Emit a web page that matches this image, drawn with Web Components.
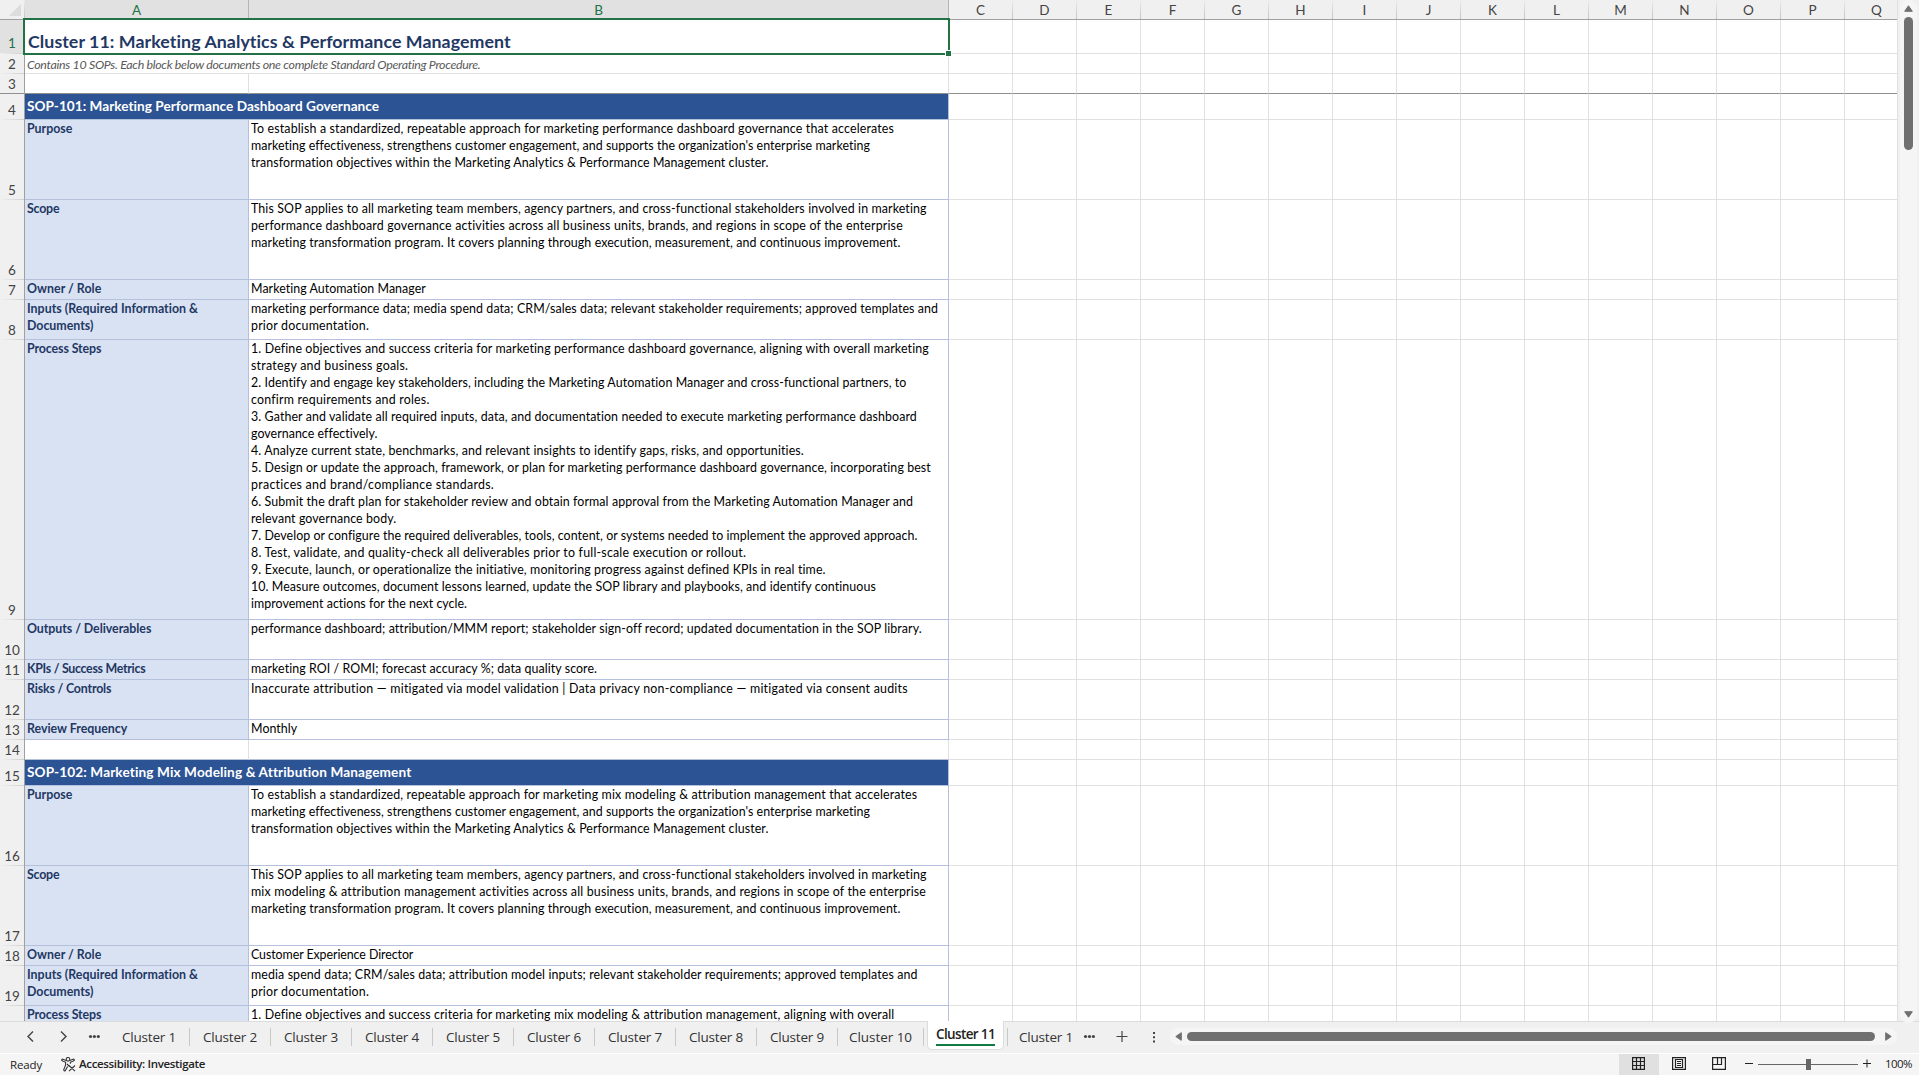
<!DOCTYPE html>
<html lang="en">
<head>
<meta charset="utf-8">
<title>Cluster 11</title>
<style>
  html, body {
    margin: 0;
    height: 100%;
    overflow: hidden;
    background: #f0f0f0;
  }
</style>
</head>
<body>
<sheet-app></sheet-app>

<script>
// One line of text spread over a given width in pixels
class FitText extends HTMLElement {
  constructor() {
    super().attachShadow({ mode: "open" }).innerHTML = /*html*/ `
      <style>
        :host { display: block; width: max-content; white-space: nowrap; }
      </style>
      <slot></slot>
    `;
  }
  connectedCallback() {
    const width = Number(this.getAttribute("width"));
    if (!width) return;
    const natural = this.getBoundingClientRect().width;
    this.style.letterSpacing = `${(width - natural) / this.textContent.length}px`;
  }
}
customElements.define("fit-text", FitText);

const escapeText = (s) => s.replace(/&/g, "&amp;");
const fit = ([text, width]) => `<fit-text width="${width - 0.7}">${escapeText(text)}</fit-text>`;

const COLUMNS = "CDEFGHIJKLMNOPQ".split("");

class ColumnHeader extends HTMLElement {
  constructor() {
    super().attachShadow({ mode: "open" }).innerHTML = /*html*/ `
      <style>
        :host {
          display: flex;
          height: 19px;
          border-bottom: 1px solid #a0a0a0;
          background: #f0f0f0;
          font: 13.5px/19px Lato, "Liberation Sans", sans-serif;
          color: #444;
        }
        div {
          box-sizing: border-box;
          flex: 0 0 64px;
          text-align: center;
          padding-top: 1px;
          border-right: 1px solid;
          border-image: linear-gradient(#f0f0f0, #c0c0c0) 1;
        }
        .corner {
          flex-basis: 25px;
          display: flex;
          justify-content: flex-end;
          padding: 4px 3px 0 0;
        }
        .corner svg { width: 12px; height: 12px; }
        .on { background: #e1e1e1; color: #217346; border-image: none; border-color: #b5b5b5; }
        .a { flex-basis: 224px; }
        .b { flex-basis: 700px; }
      </style>
      <div class="corner"><svg viewBox="0 0 12 12"><path d="M12 0V12H0z" fill="#dcdcdc"/></svg></div>
      <div class="on a">A</div>
      <div class="on b">B</div>
      ${COLUMNS.map((c) => `<div>${c}</div>`).join("")}
    `;
  }
}
customElements.define("column-header", ColumnHeader);

class SheetRow extends HTMLElement {
  constructor() {
    super().attachShadow({ mode: "open" }).innerHTML = /*html*/ `
      <style>
        :host {
          display: flex;
          height: var(--h);
          font: 12.4px/17px Lato, "Liberation Sans", sans-serif;
          color: #000;
          --line: #e0e0e0;
          --edge: #b4c0dc;
        }
        div {
          box-sizing: border-box;
          flex: 0 0 64px;
          overflow: hidden;
          border-right: 1px solid var(--line);
          border-bottom: 1px solid var(--line);
        }
        .num {
          flex-basis: 25px;
          display: flex;
          align-items: flex-end;
          justify-content: center;
          padding-bottom: 1px;
          background: linear-gradient(90deg, #f0f0f0, #cfcfcf) bottom / 100% 1px no-repeat #f0f0f0;
          border-right-color: #a0a0a0;
          border-bottom: 0;
          font-size: 13.5px;
          color: #444;
        }
        .a { flex-basis: 224px; padding-left: 2px; }
        .b { flex-basis: 700px; padding-left: 2px; }
        .ab { flex-basis: 924px; padding-left: 2px; }
        :host([kind="field"]) .a {
          background: #d9e2f3;
          color: #1f3864;
          font-weight: bold;
          border-color: var(--edge);
        }
        :host([kind="field"]) .b { border-color: var(--edge); }
        :host([kind="title"]) .num { background-color: #e1e1e1; color: #217346; padding-bottom: 2px; }
        :host([kind="title"]) .ab {
          padding: 10px 0 0 3px;
          font: bold 17.8px/22px Lato, sans-serif;
          color: #1f3864;
        }
        :host([kind="note"]) .ab { padding-top: 2px; font-style: italic; font-size: 12.4px; color: #595959; }
        :host([kind="sop"]) .ab {
          padding-top: 4px;
          background: #2c5393;
          color: #fff;
          font-weight: bold;
          font-size: 13.6px;
          border-color: var(--edge);
        }
        :host([frozen]) div:not(.num) { border-bottom-color: #909090; }
        :host([frozen]) .num { background-image: linear-gradient(#909090, #909090); }
        :host([above]) .a, :host([above]) .b { border-bottom-color: var(--edge); }
        :host([last]) div { border-bottom: 0; }
        :host([last]) .num { background-image: none; }
      </style>
    `;
  }
  set data({ n, h, kind, a = [], b = [] }) {
    this.style.setProperty("--h", `${h}px`);
    this.setAttribute("kind", kind);
    const merged = kind === "title" || kind === "note" || kind === "sop";
    this.shadowRoot.innerHTML += /*html*/ `
      <div class="num">${n}</div>
      ${merged
        ? `<div class="ab">${a.map(fit).join("")}</div>`
        : `<div class="a">${a.map(fit).join("")}</div><div class="b">${b.map(fit).join("")}</div>`}
      ${COLUMNS.map(() => "<div></div>").join("")}
    `;
  }
}
customElements.define("sheet-row", SheetRow);

const ROWS = [
  { h: 34, kind: "title", a: [["Cluster 11: Marketing Analytics & Performance Management", 484]] },
  { h: 20, kind: "note", a: [["Contains 10 SOPs. Each block below documents one complete Standard Operating Procedure.", 454]] },
  { h: 20, kind: "blank", frozen: true },
  { h: 26, kind: "sop", a: [["SOP-101: Marketing Performance Dashboard Governance", 353]] },
  { h: 80, kind: "field", a: [["Purpose", 46]], b: [
    ["To establish a standardized, repeatable approach for marketing performance dashboard governance that accelerates", 644],
    ["marketing effectiveness, strengthens customer engagement, and supports the organization's enterprise marketing", 620],
    ["transformation objectives within the Marketing Analytics & Performance Management cluster.", 519]] },
  { h: 80, kind: "field", a: [["Scope", 33]], b: [
    ["This SOP applies to all marketing team members, agency partners, and cross-functional stakeholders involved in marketing", 677],
    ["performance dashboard governance activities across all business units, brands, and regions in scope of the enterprise", 653],
    ["marketing transformation program. It covers planning through execution, measurement, and continuous improvement.", 651]] },
  { h: 20, kind: "field", a: [["Owner / Role", 75]], b: [["Marketing Automation Manager", 176]] },
  { h: 40, kind: "field", a: [["Inputs (Required Information &", 172], ["Documents)", 67]], b: [
    ["marketing performance data; media spend data; CRM/sales data; relevant stakeholder requirements; approved templates and", 688],
    ["prior documentation.", 119]] },
  { h: 280, kind: "field", a: [["Process Steps", 75]], b: [
    ["1. Define objectives and success criteria for marketing performance dashboard governance, aligning with overall marketing", 679],
    ["strategy and business goals.", 158],
    ["2. Identify and engage key stakeholders, including the Marketing Automation Manager and cross-functional partners, to", 657],
    ["confirm requirements and roles.", 179],
    ["3. Gather and validate all required inputs, data, and documentation needed to execute marketing performance dashboard", 667],
    ["governance effectively.", 127],
    ["4. Analyze current state, benchmarks, and relevant insights to identify gaps, risks, and opportunities.", 554],
    ["5. Design or update the approach, framework, or plan for marketing performance dashboard governance, incorporating best", 681],
    ["practices and brand/compliance standards.", 244],
    ["6. Submit the draft plan for stakeholder review and obtain formal approval from the Marketing Automation Manager and", 663],
    ["relevant governance body.", 146],
    ["7. Develop or configure the required deliverables, tools, content, or systems needed to implement the approved approach.", 667],
    ["8. Test, validate, and quality-check all deliverables prior to full-scale execution or rollout.", 496],
    ["9. Execute, launch, or operationalize the initiative, monitoring progress against defined KPIs in real time.", 576],
    ["10. Measure outcomes, document lessons learned, update the SOP library and playbooks, and identify continuous", 626],
    ["improvement actions for the next cycle.", 217]] },
  { h: 40, kind: "field", a: [["Outputs / Deliverables", 125]], b: [["performance dashboard; attribution/MMM report; stakeholder sign-off record; updated documentation in the SOP library.", 671]] },
  { h: 20, kind: "field", a: [["KPIs / Success Metrics", 119]], b: [["marketing ROI / ROMI; forecast accuracy %; data quality score.", 347]] },
  { h: 40, kind: "field", a: [["Risks / Controls", 85]], b: [["Inaccurate attribution — mitigated via model validation | Data privacy non-compliance — mitigated via consent audits", 658]] },
  { h: 20, kind: "field", a: [["Review Frequency", 101]], b: [["Monthly", 47]] },
  { h: 20, kind: "blank", above: true },
  { h: 26, kind: "sop", a: [["SOP-102: Marketing Mix Modeling & Attribution Management", 385]] },
  { h: 80, kind: "field", a: [["Purpose", 46]], b: [
    ["To establish a standardized, repeatable approach for marketing mix modeling & attribution management that accelerates", 667],
    ["marketing effectiveness, strengthens customer engagement, and supports the organization's enterprise marketing", 620],
    ["transformation objectives within the Marketing Analytics & Performance Management cluster.", 519]] },
  { h: 80, kind: "field", a: [["Scope", 33]], b: [
    ["This SOP applies to all marketing team members, agency partners, and cross-functional stakeholders involved in marketing", 677],
    ["mix modeling & attribution management activities across all business units, brands, and regions in scope of the enterprise", 676],
    ["marketing transformation program. It covers planning through execution, measurement, and continuous improvement.", 651]] },
  { h: 20, kind: "field", a: [["Owner / Role", 75]], b: [["Customer Experience Director", 163]] },
  { h: 40, kind: "field", a: [["Inputs (Required Information &", 172], ["Documents)", 67]], b: [
    ["media spend data; CRM/sales data; attribution model inputs; relevant stakeholder requirements; approved templates and", 667],
    ["prior documentation.", 119]] },
  { h: 15, kind: "field", last: true, a: [["Process Steps", 75]], b: [
    ["1. Define objectives and success criteria for marketing mix modeling & attribution management, aligning with overall", 644]] },
];

class SheetGrid extends HTMLElement {
  constructor() {
    super().attachShadow({ mode: "open" }).innerHTML = /*html*/ `
      <style>
        :host {
          display: block;
          position: relative;
          box-sizing: border-box;
          width: 1898px;
          height: 1021px;
          overflow: hidden;
          background: #fff;
          border-right: 1px solid #e0e0e0;
        }
        /* selected range A1:B1 with its fill handle */
        .selection {
          position: absolute;
          box-sizing: border-box;
          left: 23px;
          top: 18px;
          width: 927px;
          height: 37px;
          border: 2px solid #217346;
        }
        .selection i {
          position: absolute;
          right: -4px;
          bottom: -4px;
          width: 5px;
          height: 5px;
          background: #217346;
          border: 1px solid #fff;
        }
      </style>
      <column-header></column-header>
    `;
  }
  connectedCallback() {
    ROWS.forEach((row, i) => {
      const el = document.createElement("sheet-row");
      el.toggleAttribute("frozen", !!row.frozen);
      el.toggleAttribute("above", !!row.above);
      el.toggleAttribute("last", !!row.last);
      this.shadowRoot.append(el);
      el.data = { n: row.last ? "" : i + 1, ...row };
    });
    const selection = document.createElement("div");
    selection.className = "selection";
    selection.innerHTML = "<i></i>";
    this.shadowRoot.append(selection);
  }
}
customElements.define("sheet-grid", SheetGrid);

class ScrollBar extends HTMLElement {
  constructor() {
    super().attachShadow({ mode: "open" }).innerHTML = /*html*/ `
      <style>
        :host {
          display: flex;
          box-sizing: border-box;
          align-items: center;
          justify-content: space-between;
          background: #f5f5f5;
          border-radius: 9px;
        }
        :host([vertical]) { flex-direction: column; }
        i { background: #707070; border-radius: 4.5px; }
        :host([vertical]) i { width: 9px; height: 133px; margin-bottom: auto; margin-top: 5px; }
        :host(:not([vertical])) i { height: 9px; width: 688px; margin-right: 5px; }
        svg { display: block; fill: #707070; stroke: #707070; stroke-linejoin: round; }
      </style>
      ${this.hasAttribute("vertical")
        ? `<svg width="9" height="7"><path d="M4.5 .8L8.3 6.3H.7z"/></svg><i></i>
           <svg width="9" height="7"><path d="M4.5 6.2L8.3 .7H.7z"/></svg>`
        : `<svg width="7" height="9"><path d="M.8 4.5L6.3 .7V8.3z"/></svg><i></i>
           <svg width="7" height="9"><path d="M6.2 4.5L.7 .7V8.3z"/></svg>`}
    `;
  }
}
customElements.define("scroll-bar", ScrollBar);

class SheetTab extends HTMLElement {
  constructor() {
    super().attachShadow({ mode: "open" }).innerHTML = /*html*/ `
      <style>
        :host {
          display: flex;
          box-sizing: border-box;
          flex: none;
          width: 81px;
          height: 18px;
          margin-top: 6px;
          justify-content: center;
          border-right: 1px solid #c8c8c8;
          font: 13.5px/18px "Open Sans", "Noto Sans", sans-serif;
          color: #333;
        }
        :host([wide]) { width: 86px; }
        :host([cut]) { width: 70px; border: 0; }
        :host([active]) {
          width: 77px;
          height: 29px;
          margin: -1px 3px 0;
          padding-top: 4px;
          background: #fff;
          border: 1px solid #dcdcdc;
          border-top: 0;
          border-radius: 0 0 5px 5px;
          font-weight: 600;
          color: #222;
        }
        :host([active]) fit-text { height: 19px; border-bottom: 2px solid #107c41; }
      </style>
      <fit-text width="${this.getAttribute("text-width")}">${this.getAttribute("label")}</fit-text>
    `;
  }
}
customElements.define("sheet-tab", SheetTab);

class TabBar extends HTMLElement {
  constructor() {
    super().attachShadow({ mode: "open" }).innerHTML = /*html*/ `
      <style>
        :host {
          display: flex;
          box-sizing: border-box;
          height: 33px;
          border-top: 1px solid #dcdcdc;
          border-bottom: 1px solid #fff;
          background: #f0f0f0;
        }
        svg { display: block; flex: none; fill: none; stroke: #444; }
        .dots { fill: #444; stroke: none; }
        .edge { width: 1px; height: 18px; margin: 6px 0 0; background: #c8c8c8; }
        scroll-bar { flex: none; width: 727px; height: 17px; margin: 6px 22px 0 auto; padding: 0 5px; }
      </style>
      <svg width="109" height="31">
        <path d="M33 9.5L28 14.5L33 19.5M61 9.5L66 14.5L61 19.5" stroke-width="1.4"/>
        <g class="dots"><circle cx="90.5" cy="14.5" r="1.6"/><circle cx="94.4" cy="14.5" r="1.6"/><circle cx="98.3" cy="14.5" r="1.6"/></g>
      </svg>
      ${[1, 2, 3, 4, 5, 6, 7, 8, 9].map((n) => `<sheet-tab label="Cluster ${n}" text-width="54"></sheet-tab>`).join("")}
      <sheet-tab wide label="Cluster 10" text-width="63"></sheet-tab>
      <sheet-tab active label="Cluster 11" text-width="59"></sheet-tab>
      <span class="edge"></span>
      <sheet-tab cut label="Cluster 1" text-width="54" style="margin-left:3px"></sheet-tab>
      <svg width="80" height="31">
        <g class="dots">
          <circle cx="4.5" cy="14.5" r="1.6"/><circle cx="8.5" cy="14.5" r="1.6"/><circle cx="12.4" cy="14.5" r="1.6"/>
          <path d="M72 10h2v2h-2zM72 14.200h2v2h-2zM72 18.400h2v2h-2z"/>
        </g>
        <path d="M35.500 14.500H46.500M41 9V20" stroke-width="1.2"/>
      </svg>
      <scroll-bar></scroll-bar>
    `;
  }
}
customElements.define("tab-bar", TabBar);

class StatusBar extends HTMLElement {
  constructor() {
    super().attachShadow({ mode: "open" }).innerHTML = /*html*/ `
      <style>
        :host {
          display: flex;
          height: 21px;
          background: #f5f5f5;
          font: 11.5px/18px "Open Sans", "Noto Sans", sans-serif;
          color: #222;
        }
        svg { display: block; flex: none; fill: none; stroke: #222; }
        .ready { margin: 2px 0 0 10px; }
        .access { margin: 3px 3px 0 19px; stroke: #333; }
        .investigate { margin-top: 1px; font-weight: 600; color: #222; }
        .view { display: flex; justify-content: center; width: 40px; height: 21px; padding-top: 3px; box-sizing: border-box; }
        .normal { margin-left: auto; background: #e0e0e0; }
        .percent { margin: 1px 7px 0 0; }
      </style>
      <fit-text class="ready" width="32">Ready</fit-text>
      <svg class="access" width="15" height="15" stroke-width="1.1">
        <circle cx="7" cy="2.300" r="1.800"/>
        <path d="M5.200 3.400L2 2.200Q.4 2 .7 3.300Q1 4 4.600 5.300V8L2.700 12.800Q2.800 14.200 4.200 13.700L6.600 9.400M8.800 3.400L12 2.200Q13.600 2 13.300 3.300Q13 4 9.400 5.300V6.800M6 7L8.500 9.500M8 8.500L14 14.200M14 8.500L8 14.200"/>
      </svg>
      <fit-text class="investigate" width="126">Accessibility: Investigate</fit-text>
      <span class="view normal"><svg width="14" height="14"><path d="M.6 .6H12.400V12.400H.6zM4.500 .6V12.400M8.500 .6V12.400M.6 4.500H12.400M.6 8.500H12.400" stroke-width="1.200"/></svg></span>
      <span class="view"><svg width="14" height="14"><path d="M.6 .6H13.400V12.400H.6zM3.500 2.500H10.500V10.500H3.500zM5 4.500H9M5 6.500H9M5 8.500H9" stroke-width="1.200"/></svg></span>
      <span class="view"><svg width="14" height="14"><path d="M.6 .6H13.400V12.400H.6zM.6 7.500H9.500V.6M5.500 .6V7.500" stroke-width="1.200"/></svg></span>
      <svg width="146" height="21">
        <path d="M6 9.500H14M124 9.500H132M128 5.500V13.500"/>
        <path d="M19 10.500H119" stroke="#666"/>
        <path d="M67 5H72V16H67z" fill="#666" stroke="none"/>
      </svg>
      <fit-text class="percent" width="27">100%</fit-text>
    `;
  }
}
customElements.define("status-bar", StatusBar);

class SheetApp extends HTMLElement {
  constructor() {
    super().attachShadow({ mode: "open" }).innerHTML = /*html*/ `
      <style>
        :host { display: block; width: 1919px; height: 1075px; overflow: hidden; background: #f0f0f0; }
        .main { display: flex; height: 1021px; }
        scroll-bar { width: 17px; height: 1023px; margin-left: 2px; padding: 5px 0; }
      </style>
      <div class="main">
        <sheet-grid></sheet-grid>
        <scroll-bar vertical></scroll-bar>
      </div>
      <tab-bar></tab-bar>
      <status-bar></status-bar>
    `;
  }
}
customElements.define("sheet-app", SheetApp);
</script>
</body>
</html>
